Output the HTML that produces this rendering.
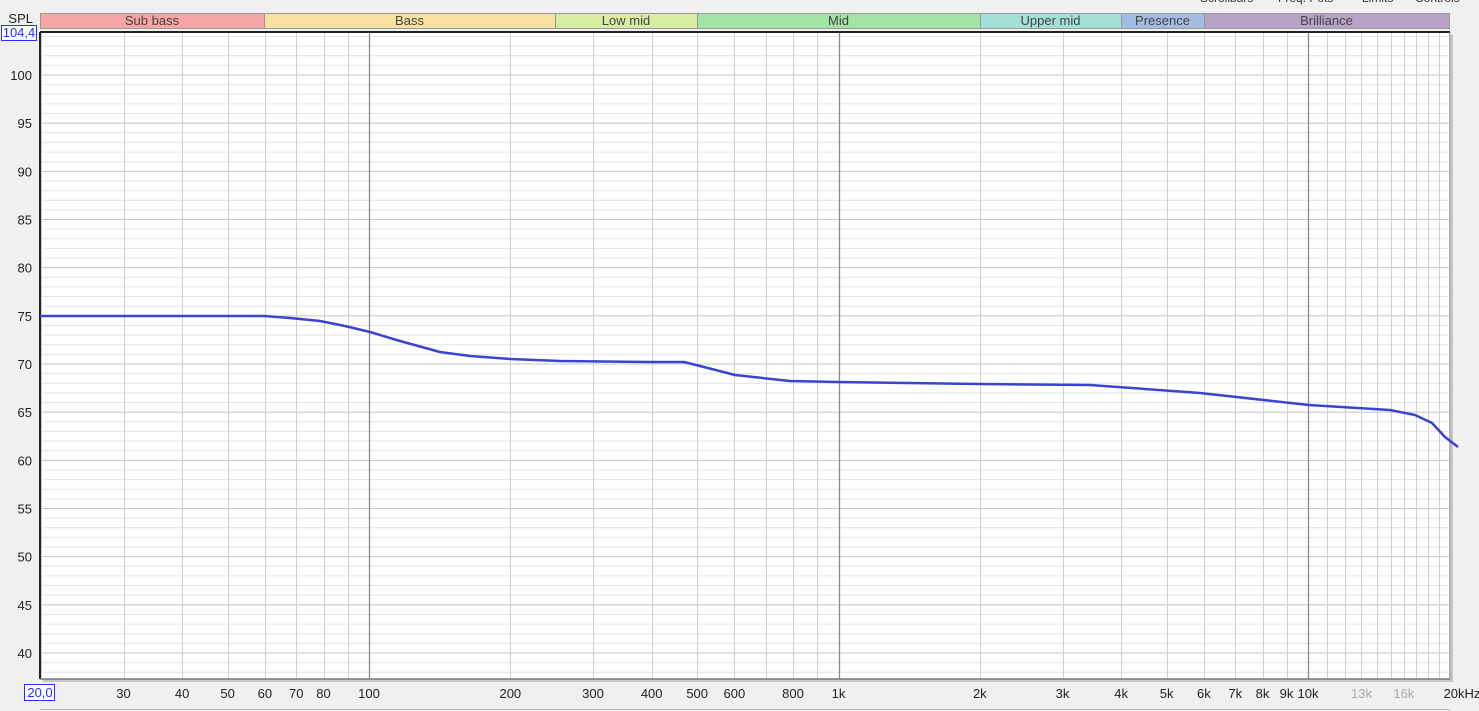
<!DOCTYPE html>
<html><head><meta charset="utf-8"><style>
html,body{margin:0;padding:0;background:#f0f0f0;width:1479px;height:711px;overflow:hidden;font-family:"Liberation Sans",sans-serif}
</style></head><body>
<svg id="s" width="1479" height="711" xmlns="http://www.w3.org/2000/svg" font-family="Liberation Sans, sans-serif" font-size="12">
<text x="1200" y="2" fill="#333">Scrollbars</text><text x="1278" y="2" fill="#333">Freq. Pots</text><text x="1362" y="2" fill="#333">Limits</text><text x="1415" y="2" fill="#333">Controls</text>
</svg>
<script>
const s=document.getElementById('s');const NS='http://www.w3.org/2000/svg';
function el(t,a,txt){const e=document.createElementNS(NS,t);for(const k in a)e.setAttribute(k,a[k]);if(txt!==undefined)e.textContent=txt;s.appendChild(e);return e;}
const L=40,R=1450,T=32,B=679;
const fx=f=>369+469.5*Math.log10(f/100);
const dy=d=>75+(100-d)*9.633;
// shadow
el('rect',{x:L+3,y:T+3,width:R-L,height:B-T,fill:'#c8c8c8'});
el('rect',{x:L,y:T,width:R-L,height:B-T,fill:'#fff'});
// horizontal
for(let d=38;d<=104;d++){const y=dy(d);if(y<T||y>B)continue;el('line',{x1:L,x2:R,y1:y,y2:y,stroke:d%5==0?'#c4c4c4':'#e4e4e4','stroke-width':1});}
// vertical
const fs=[];for(let f=20;f<100;f+=10)fs.push(f);for(let f=100;f<1000;f+=100)fs.push(f);for(let f=1000;f<10000;f+=1000)fs.push(f);for(let f=10000;f<=20000;f+=1000)fs.push(f);
fs.forEach(f=>{const x=Math.round(fx(f))+.5;const maj=(f==100||f==1000||f==10000);el('line',{x1:x,x2:x,y1:T,y2:B,stroke:maj?'#8a8a8a':'#d0d0d0','stroke-width':maj?1.3:1});});
el('line',{x1:L,x2:L,y1:T,y2:B,stroke:'#222','stroke-width':2});
el('line',{x1:L,x2:R,y1:T,y2:T,stroke:'#222','stroke-width':2});
el('line',{x1:L,x2:R,y1:B,y2:B,stroke:'#777','stroke-width':1.5});
el('line',{x1:R,x2:R,y1:T,y2:B,stroke:'#999','stroke-width':1});
// bands
const bands=[[40,264,'#f7a4a4','Sub bass'],[264,555,'#f8e1a0','Bass'],[555,697,'#d9eda2','Low mid'],[697,980,'#a2e3a6','Mid'],[980,1121,'#a2e0d8','Upper mid'],[1121,1204,'#a4bce2','Presence'],[1204,1449,'#b8a2c8','Brilliance']];
bands.forEach(b=>{el('rect',{x:b[0]+.5,y:13.5,width:b[1]-b[0],height:15,fill:b[2],stroke:'#999'});el('text',{x:(b[0]+b[1])/2,y:25,'text-anchor':'middle',fill:'#444','font-size':13},b[3]);});
// y labels
el('text',{x:33,y:23,'text-anchor':'end',fill:'#222','font-size':13},'SPL');
el('rect',{x:1.5,y:25.5,width:35,height:15,fill:'#fff',stroke:'#2030ff'});
el('text',{x:19,y:37,'text-anchor':'middle',fill:'#2030ff','font-size':13},'104,4');
for(let d=40;d<=100;d+=5)el('text',{x:32,y:dy(d)+5,'text-anchor':'end',fill:'#222','font-size':13},String(d));
// x labels
el('rect',{x:24.5,y:684.5,width:30,height:16,fill:'#fff',stroke:'#2030ff'});
el('text',{x:40,y:697,'text-anchor':'middle',fill:'#2030ff','font-size':13},'20,0');
const xl=[[30,'30'],[40,'40'],[50,'50'],[60,'60'],[70,'70'],[80,'80'],[100,'100'],[200,'200'],[300,'300'],[400,'400'],[500,'500'],[600,'600'],[800,'800'],[1000,'1k'],[2000,'2k'],[3000,'3k'],[4000,'4k'],[5000,'5k'],[6000,'6k'],[7000,'7k'],[8000,'8k'],[9000,'9k'],[10000,'10k'],[13000,'13k','#aaa'],[16000,'16k','#aaa']];
xl.forEach(a=>el('text',{x:fx(a[0]),y:698,'text-anchor':'middle',fill:a[2]||'#222','font-size':13},a[1]));
el('text',{x:1462,y:698,'text-anchor':'middle',fill:'#222','font-size':13},'20kHz');
el('line',{x1:40,x2:1450,y1:709.5,y2:709.5,stroke:'#bbb'});
// curve
const pts=[[40,316],[264,316],[290,318],[320,321],[345,326],[370,332],[400,341],[440,352],[470,356],[510,359],[560,361],[650,362],[684,362],[700,366],[735,375],[790,381],[838,382],[980,384],[1090,385],[1200,393],[1309,405],[1390,410],[1415,415],[1432,423],[1445,437],[1458,447]];
el('polyline',{points:pts.map(p=>p.join(',')).join(' '),fill:'none',stroke:'#3a44d0','stroke-width':2.5,'stroke-linejoin':'round'});
</script>
</body></html>
